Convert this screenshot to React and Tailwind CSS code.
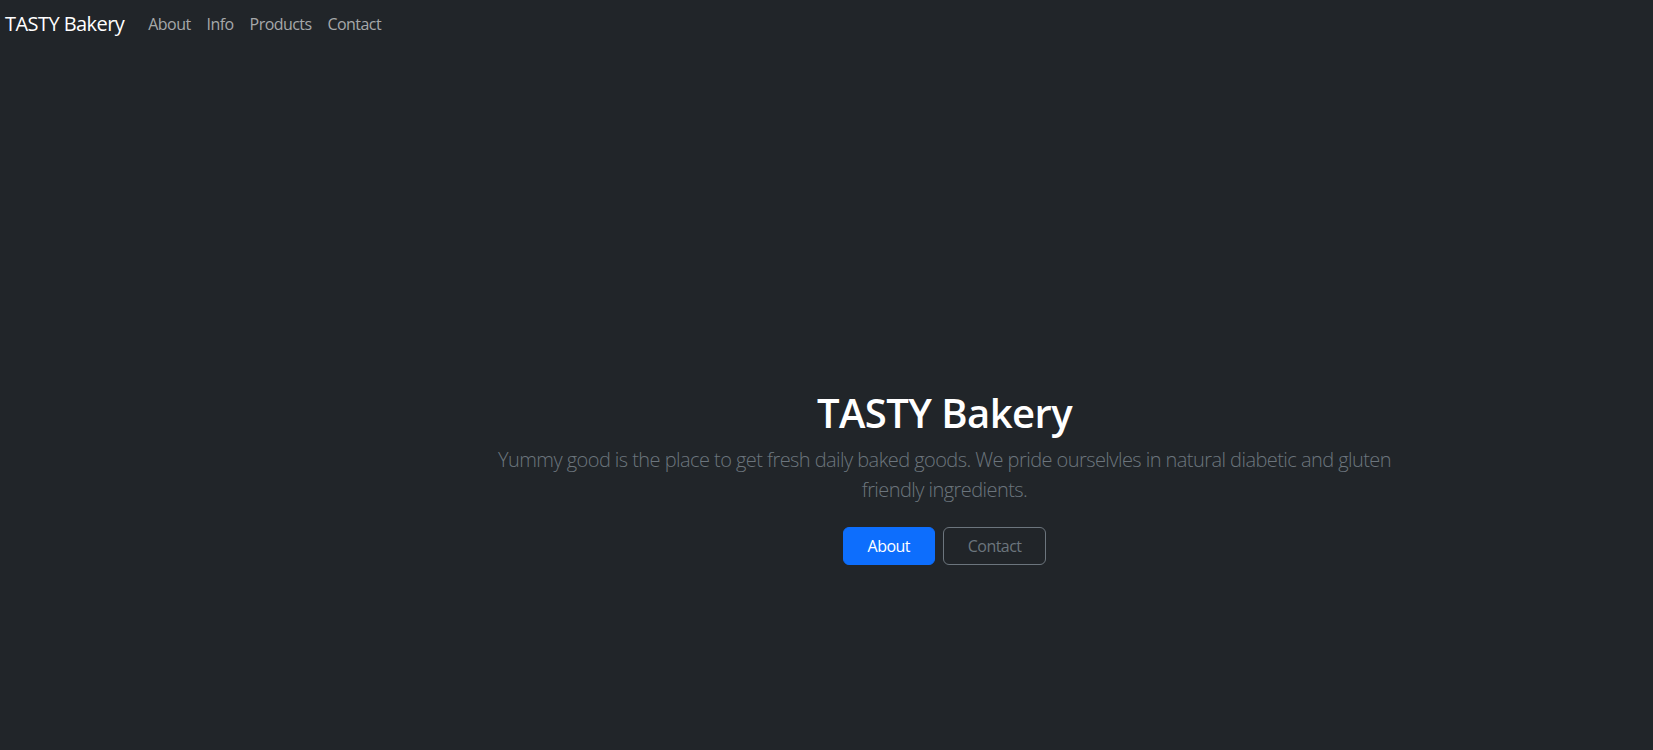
import React from 'react';

const links = ['About', 'Info', 'Products', 'Contact'];

const App = () => {
  return (
    <div className="min-h-screen bg-[#212529] font-['Open_Sans',sans-serif] tracking-[-0.035em]">
      <nav className="flex items-center pt-1 pb-2 pl-[5px]">
        <a href="#" className="mr-[16px] py-[5px] text-[20px] leading-[30px] text-white">
          TASTY Bakery
        </a>
        <ul className="flex">
          {links.map((l) => (
            <li key={l}>
              <a href="#" className="block px-2 py-2 text-[16px] leading-6 text-[#a6a8aa]">
                {l}
              </a>
            </li>
          ))}
        </ul>
      </nav>

      <div className="ml-[236px] flex flex-col items-center pt-[337px] text-center">
        <h1 className="mb-2 text-[40px] font-semibold leading-[48px] text-white">TASTY Bakery</h1>
        <p className="mb-[22px] w-[905px] text-[20px] font-light leading-[30px] text-[#6c757d]">
          Yummy good is the place to get fresh daily baked goods. We pride ourselvles in natural diabetic and gluten friendly ingredients.
        </p>
        <div className="flex gap-2">
          <button className="rounded-md border border-[#0d6efd] bg-[#0d6efd] px-6 py-1.5 text-[16px] leading-6 text-white">
            About
          </button>
          <button className="rounded-md border border-[#6c757d] px-6 py-1.5 text-[16px] leading-6 text-[#6c757d]">
            Contact
          </button>
        </div>
      </div>
    </div>
  );
};

export default App;
